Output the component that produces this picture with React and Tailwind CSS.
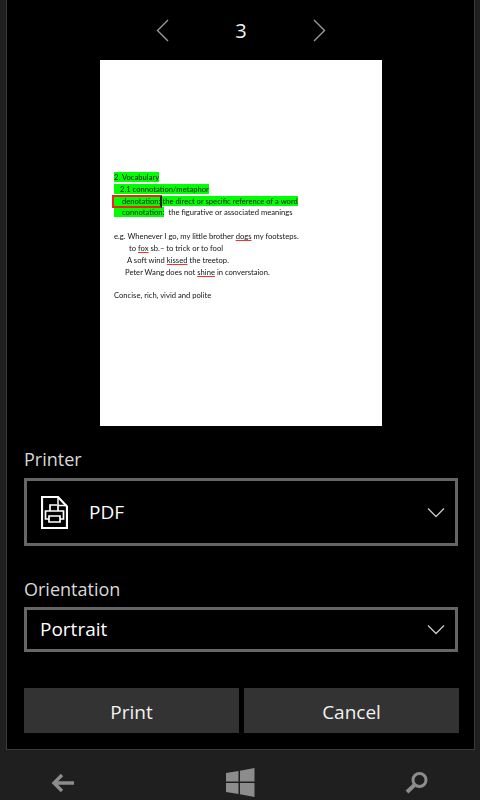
import React from "react";

const Chevron = () => (
  <svg width="18" height="11" viewBox="0 0 18 11" fill="none" stroke="#c8c8c8" strokeWidth="1.3">
    <path d="M1 1.5 L9 9.5 L17 1.5" />
  </svg>
);

const PrinterIcon = () => (
  <svg width="27" height="33" viewBox="0 0 27 33" fill="none" stroke="#fff" strokeWidth="2.2">
    <path d="M1 1 H17 L26 10.5 V32 H1 Z" />
    <path d="M17 1 V9.5 H26" strokeWidth="1.5" />
    <path d="M9 15 V9 H16" strokeWidth="1.7" />
    <path d="M17 9.5 V15" strokeWidth="1.7" />
    <path d="M8 23 H4.5 V15 H22.5 V23 H19" strokeWidth="1.7" />
    <path d="M8 20 H19 V26 H8 Z" strokeWidth="1.7" />
  </svg>
);

const Squiggle = ({ children }) => (
  <span className="underline decoration-[#ff2a2a] decoration-[1.4px] underline-offset-[1px]">{children}</span>
);

const Page = () => (
  <div className="w-[282px] h-[366px] mx-auto bg-white pt-[112px] pl-[14px] font-['Lato',sans-serif] text-[7.65px] leading-[11.8px] text-[#141414] whitespace-nowrap blur-[0.25px]">
    <div><span className="bg-[#00ff00]">2. Vocabulary</span></div>
    <div><span className="bg-[#00ff00] pl-[6px]">2.1 connotation/metaphor</span></div>
    <div className="relative">
      <span className="bg-[#00ff00] pl-[8px]">denotation:</span>
      <span className="bg-[#00ff00]"> the direct or specific reference of a word</span>
      <span className="absolute left-[-2px] top-[-1px] w-[50px] h-[13px] border-2 border-[#ff1a24] border-r-[#222222]"></span>
    </div>
    <div><span className="bg-[#00ff00] pl-[8px]">connotation:</span><span className="pl-[4px]">the figurative or associated meanings</span></div>
    <div className="mt-[12px]">e.g. Whenever I go, my little brother <Squiggle>dogs</Squiggle> my footsteps.</div>
    <div className="pl-[15px]">to <Squiggle>fox</Squiggle> sb.– to trick or to fool</div>
    <div className="pl-[13px]">A soft wind <Squiggle>kissed</Squiggle> the treetop.</div>
    <div className="pl-[11px]">Peter Wang does not <Squiggle>shine</Squiggle> in converstaion.</div>
    <div className="mt-[12px]">Concise, rich, vivid and polite</div>
  </div>
);

export default function App() {
  return (
    <div className="w-[480px] h-[800px] bg-[#1f1f1f] flex flex-col overflow-hidden font-['Open_Sans',sans-serif] text-white">
      <div className="mx-[6px] w-[469px] h-[750px] bg-black border-x border-b border-[#3a3a3a] flex flex-col">
        <div className="h-[60px] flex items-center justify-center gap-[52px] pl-[1px]">
          <svg width="13" height="23" viewBox="0 0 13 23" fill="none" stroke="#9a9a9a" strokeWidth="1.4"><path d="M12 1 L1.5 11.5 L12 22" /></svg>
          <span className="w-[40px] text-center text-[20px] leading-[24px] text-[#f2f2f2] pt-[1px]">3</span>
          <svg width="13" height="23" viewBox="0 0 13 23" fill="none" stroke="#9a9a9a" strokeWidth="1.4"><path d="M1 1 L11.5 11.5 L1 22" /></svg>
        </div>

        <div className="-ml-[6px] w-[480px]"><Page /></div>

        <div className="pl-[17px] pr-[15px]">
          <div className="mt-[19px] text-[18px] leading-[28px] text-[#d8d8d8]">Printer</div>
          <div className="mt-[5px] mr-[1px] h-[68px] border-[3px] border-[#666666] flex items-center justify-between pl-[14px] pr-[10px]">
            <div className="flex items-center gap-[21px]">
              <PrinterIcon />
              <span className="text-[19px]">PDF</span>
            </div>
            <Chevron />
          </div>

          <div className="mt-[29px] text-[18px] leading-[28px] text-[#d8d8d8]">Orientation</div>
          <div className="mt-[4px] mr-[1px] h-[45px] border-[3px] border-[#666666] flex items-center justify-between pl-[13px] pr-[10px]">
            <span className="text-[19px]">Portrait</span>
            <Chevron />
          </div>

          <div className="mt-[36px] flex gap-[5px]">
            <button className="w-[215px] h-[45px] bg-[#333333] text-[19px] text-[#f2f2f2] pt-[3px]">Print</button>
            <button className="w-[215px] h-[45px] bg-[#333333] text-[19px] text-[#f2f2f2] pt-[3px]">Cancel</button>
          </div>
        </div>
      </div>

      <div className="flex-1 flex items-center justify-between pt-[15px] pl-[51px] pr-[51px]">
        <svg width="24" height="20" viewBox="0 0 24 20" fill="none" stroke="#8c8c8c" strokeWidth="3.4"><path d="M11 2 L3 10 L11 18 M3.5 10 H23" /></svg>
        <svg width="29" height="29" viewBox="0 0 29 29" fill="#8c8c8c"><path d="M0 5 L12.5 3 V13.5 H0 Z M14 2.8 L28.5 0 V13.5 H14 Z M0 15 H12.5 V26 L0 24 Z M14 15 H28.5 V29 L14 26.2 Z" /></svg>
        <svg width="24" height="23" viewBox="0 0 24 23" fill="none" stroke="#8c8c8c"><circle cx="14.5" cy="9" r="6.5" strokeWidth="3" /><path d="M9.5 14 L2 21" strokeWidth="4" /></svg>
      </div>
    </div>
  );
}
